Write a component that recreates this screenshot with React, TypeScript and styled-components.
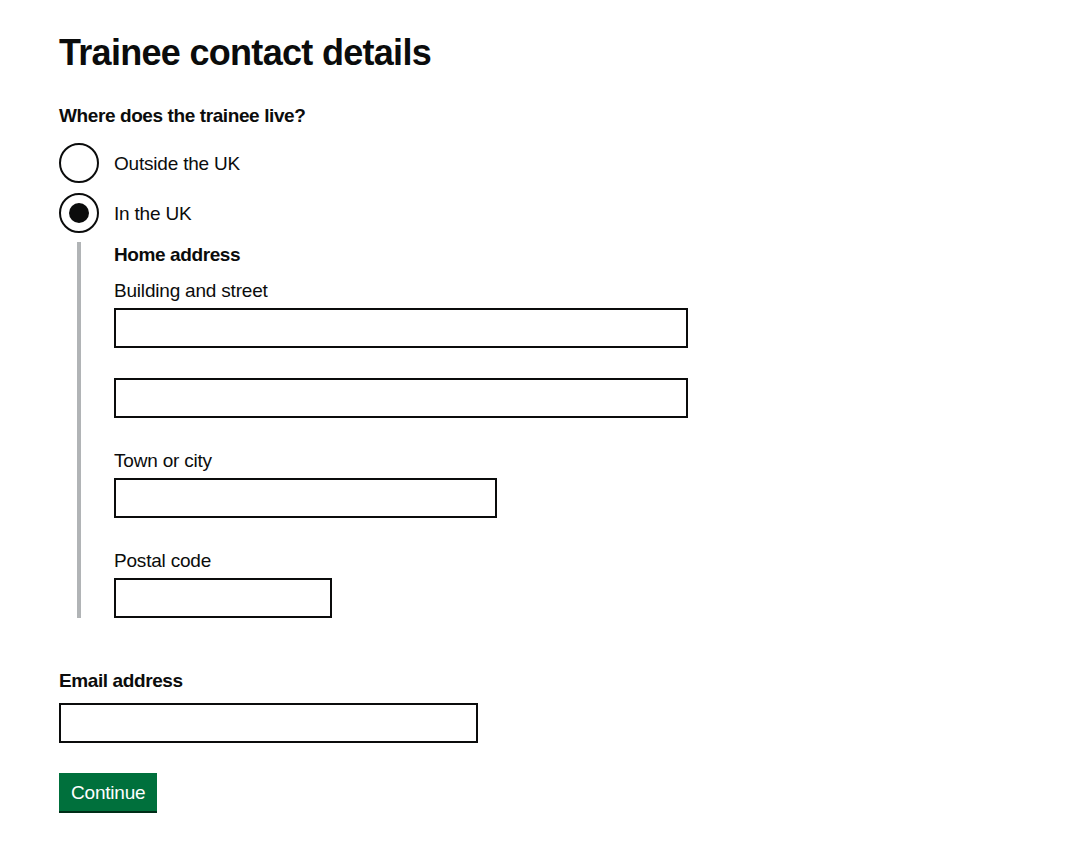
import styled, { createGlobalStyle } from 'styled-components';

const GlobalStyle = createGlobalStyle`
  html, body {
    margin: 0;
    padding: 0;
    background: #ffffff;
  }
  body {
    font-family: 'Liberation Sans', Arial, sans-serif;
    color: #0b0c0c;
    -webkit-font-smoothing: antialiased;
  }
`;

const Page = styled.main`
  padding: 33px 59px 40px;
`;

const Heading = styled.h1`
  margin: 0 0 30px;
  font-size: 36px;
  line-height: 40px;
  font-weight: 700;
  letter-spacing: -0.7px;
`;

const FormGroup = styled.div<{ $last?: boolean; $top?: number }>`
  margin-top: ${(p) => p.$top ?? 0}px;
  margin-bottom: ${(p) => (p.$last ? '0' : '30px')};
`;

const Fieldset = styled.fieldset`
  margin: 0;
  padding: 0;
  border: 0;
  min-width: 0;
`;

const Legend = styled.legend<{ $gap?: number }>`
  padding: 0;
  margin-bottom: ${(p) => p.$gap ?? 15}px;
  font-size: 19px;
  line-height: 25px;
  font-weight: 700;
  letter-spacing: -0.4px;
`;

const RadioItem = styled.label`
  display: flex;
  align-items: center;
  gap: 15px;
  height: 40px;
  margin-bottom: 10px;
  font-size: 19px;
  line-height: 25px;
  letter-spacing: -0.2px;
  cursor: pointer;
`;

const RadioCircle = styled.span<{ $checked?: boolean }>`
  box-sizing: border-box;
  width: 40px;
  height: 40px;
  flex: 0 0 40px;
  border: 2px solid #0b0c0c;
  border-radius: 50%;
  display: flex;
  align-items: center;
  justify-content: center;

  &::after {
    content: '';
    width: 20px;
    height: 20px;
    border-radius: 50%;
    background: #0b0c0c;
    display: ${(p) => (p.$checked ? 'block' : 'none')};
  }
`;

const Conditional = styled.div`
  margin-left: 18px;
  padding-left: 33px;
  border-left: 4px solid #b1b4b6;
  margin-top: -1px;
`;

const Label = styled.label<{ $bold?: boolean }>`
  display: block;
  font-size: 19px;
  line-height: 25px;
  font-weight: ${(p) => (p.$bold ? 700 : 400)};
  letter-spacing: ${(p) => (p.$bold ? '-0.4px' : '-0.2px')};
  margin-bottom: ${(p) => (p.$bold ? '10px' : '5px')};
`;

const Input = styled.input<{ $width: number }>`
  display: block;
  box-sizing: border-box;
  width: ${(p) => p.$width}px;
  height: 40px;
  margin: 0;
  padding: 5px;
  border: 2px solid #0b0c0c;
  border-radius: 0;
  font-family: inherit;
  font-size: 19px;
  background: #ffffff;
  appearance: none;
`;

const Button = styled.button`
  box-sizing: border-box;
  display: inline-block;
  margin: 0;
  padding: 8px 10px 7px;
  border: 2px solid transparent;
  border-radius: 0;
  background: #00703c;
  box-shadow: 0 2px 0 #002d18;
  color: #ffffff;
  font-family: inherit;
  font-size: 19px;
  line-height: 19px;
  letter-spacing: -0.2px;
  cursor: pointer;
`;

export default function App() {
  return (
    <>
      <GlobalStyle />
      <Page>
        <Heading>Trainee contact details</Heading>

        <FormGroup>
          <Fieldset>
            <Legend>Where does the trainee live?</Legend>
            <RadioItem>
              <RadioCircle />
              Outside the UK
            </RadioItem>
            <RadioItem>
              <RadioCircle $checked />
              In the UK
            </RadioItem>
            <Conditional>
              <Fieldset>
                <Legend $gap={11}>Home address</Legend>
                <FormGroup>
                  <Label>Building and street</Label>
                  <Input $width={574} />
                </FormGroup>
                <FormGroup>
                  <Input $width={574} aria-label="Building and street line 2" />
                </FormGroup>
                <FormGroup>
                  <Label>Town or city</Label>
                  <Input $width={383} />
                </FormGroup>
                <FormGroup $last>
                  <Label>Postal code</Label>
                  <Input $width={218} />
                </FormGroup>
              </Fieldset>
            </Conditional>
          </Fieldset>
        </FormGroup>

        <FormGroup $top={50}>
          <Label $bold>Email address</Label>
          <Input $width={419} />
        </FormGroup>

        <Button>Continue</Button>
      </Page>
    </>
  );
}
